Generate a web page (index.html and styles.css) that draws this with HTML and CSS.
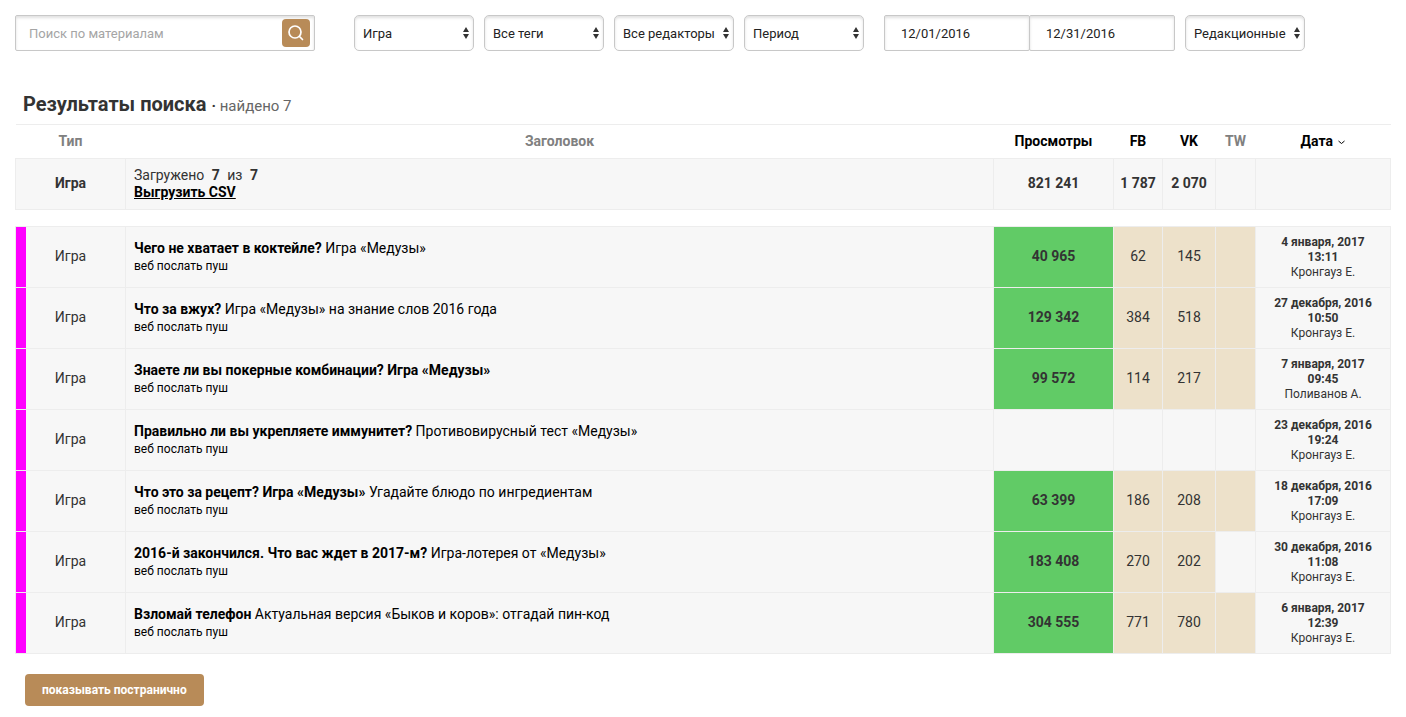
FILE: index.html
```html
<!DOCTYPE html>
<html lang="ru">
<head>
<meta charset="utf-8">
<title>Результаты поиска</title>
<meta name="viewport" content="width=device-width, initial-scale=1">
<link rel="stylesheet" href="styles.css">
</head>
<body>
<svg class="sprite" aria-hidden="true">
  <symbol id="arrows" viewBox="0 0 6 12"><path d="M3 0L6 5H0zM3 12L0 7H6z" fill="currentColor"/></symbol>
</svg>
<main class="page">
  <form class="filters">
    <div class="search">
      <input class="search-input" type="text" placeholder="Поиск по материалам" aria-label="Поиск по материалам">
      <button class="search-button" type="button" aria-label="Найти">
        <svg width="16" height="16" viewBox="0 0 16 16" fill="none" stroke="currentColor" stroke-width="1.7" stroke-linecap="round"><circle cx="7" cy="7" r="6"/><path d="M11.5 11.5L14.5 14.5"/></svg>
      </button>
    </div>
    <div class="group">
      <div class="select"><select aria-label="Тип"><option>Игра</option></select><svg class="arrows"><use href="#arrows"/></svg></div>
      <div class="select"><select aria-label="Теги"><option>Все теги</option></select><svg class="arrows"><use href="#arrows"/></svg></div>
      <div class="select"><select aria-label="Редакторы"><option>Все редакторы</option></select><svg class="arrows"><use href="#arrows"/></svg></div>
      <div class="select"><select aria-label="Период"><option>Период</option></select><svg class="arrows"><use href="#arrows"/></svg></div>
    </div>
    <div class="group">
      <div class="dates">
        <input class="date-input" type="text" value="12/01/2016" aria-label="Начало периода">
        <input class="date-input" type="text" value="12/31/2016" aria-label="Конец периода">
      </div>
      <div class="select"><select aria-label="Материалы"><option>Редакционные</option></select><svg class="arrows"><use href="#arrows"/></svg></div>
    </div>
  </form>

  <h1 class="heading">Результаты поиска <span class="found"><b>·</b> найдено 7</span></h1>

  <table class="results">
    <colgroup><col class="col-type"><col><col class="col-views"><col class="col-fb"><col class="col-vk"><col class="col-tw"><col class="col-date"></colgroup>
    <thead>
      <tr>
        <th class="muted">Тип</th><th class="muted">Заголовок</th><th>Просмотры</th><th>FB</th><th>VK</th><th class="muted">TW</th>
        <th>Дата <svg class="chevron" width="7" height="5" viewBox="0 0 7 5" fill="none" stroke="currentColor"><path d="M.5 1l3 2.5 3-2.5"/></svg></th>
      </tr>
    </thead>
    <tbody>
      <tr class="summary">
        <td>Игра</td>
        <td class="title">Загружено <b class="count">7</b> из <b class="count">7</b><br><a class="export" href="#">Выгрузить CSV</a></td>
        <td>821&nbsp;241</td><td>1&nbsp;787</td><td>2&nbsp;070</td><td></td><td></td>
      </tr>
    </tbody>
    <tbody>
      <tr class="spacer"><td colspan="7"></td></tr>
    </tbody>
    <tbody class="items">
      <tr>
        <td class="type">Игра</td>
        <td class="title"><a href="#"><b>Чего не хватает в коктейле?</b> Игра «Медузы»</a><div class="actions"><a href="#">веб</a> <a href="#">послать пуш</a></div></td>
        <td class="views">40&nbsp;965</td><td class="social">62</td><td class="social">145</td><td class="social"></td>
        <td class="date"><b>4 января, 2017<br>13:11</b><br>Кронгауз Е.</td>
      </tr>
      <tr>
        <td class="type">Игра</td>
        <td class="title"><a href="#"><b>Что за вжух?</b> Игра «Медузы» на знание слов 2016 года</a><div class="actions"><a href="#">веб</a> <a href="#">послать пуш</a></div></td>
        <td class="views">129&nbsp;342</td><td class="social">384</td><td class="social">518</td><td class="social"></td>
        <td class="date"><b>27 декабря, 2016<br>10:50</b><br>Кронгауз Е.</td>
      </tr>
      <tr>
        <td class="type">Игра</td>
        <td class="title"><a href="#"><b>Знаете ли вы покерные комбинации? Игра «Медузы»</b></a><div class="actions"><a href="#">веб</a> <a href="#">послать пуш</a></div></td>
        <td class="views">99&nbsp;572</td><td class="social">114</td><td class="social">217</td><td class="social"></td>
        <td class="date"><b>7 января, 2017<br>09:45</b><br>Поливанов А.</td>
      </tr>
      <tr>
        <td class="type">Игра</td>
        <td class="title"><a href="#"><b>Правильно ли вы укрепляете иммунитет?</b> Противовирусный тест «Медузы»</a><div class="actions"><a href="#">веб</a> <a href="#">послать пуш</a></div></td>
        <td></td><td></td><td></td><td></td>
        <td class="date"><b>23 декабря, 2016<br>19:24</b><br>Кронгауз Е.</td>
      </tr>
      <tr>
        <td class="type">Игра</td>
        <td class="title"><a href="#"><b>Что это за рецепт? Игра «Медузы»</b> Угадайте блюдо по ингредиентам</a><div class="actions"><a href="#">веб</a> <a href="#">послать пуш</a></div></td>
        <td class="views">63&nbsp;399</td><td class="social">186</td><td class="social">208</td><td class="social"></td>
        <td class="date"><b>18 декабря, 2016<br>17:09</b><br>Кронгауз Е.</td>
      </tr>
      <tr>
        <td class="type">Игра</td>
        <td class="title"><a href="#"><b>2016-й закончился. Что вас ждет в 2017-м?</b> Игра-лотерея от «Медузы»</a><div class="actions"><a href="#">веб</a> <a href="#">послать пуш</a></div></td>
        <td class="views">183&nbsp;408</td><td class="social">270</td><td class="social">202</td><td></td>
        <td class="date"><b>30 декабря, 2016<br>11:08</b><br>Кронгауз Е.</td>
      </tr>
      <tr>
        <td class="type">Игра</td>
        <td class="title"><a href="#"><b>Взломай телефон</b> Актуальная версия «Быков и коров»: отгадай пин-код</a><div class="actions"><a href="#">веб</a> <a href="#">послать пуш</a></div></td>
        <td class="views">304&nbsp;555</td><td class="social">771</td><td class="social">780</td><td class="social"></td>
        <td class="date"><b>6 января, 2017<br>12:39</b><br>Кронгауз Е.</td>
      </tr>
    </tbody>
  </table>

  <button class="paging" type="button">показывать постранично</button>
</main>
</body>
</html>
```
FILE: styles.css
```css
* { box-sizing: border-box; }

body {
  margin: 0;
  background: #fff;
  color: #333;
  font: 14px/17px Roboto, "Liberation Sans", sans-serif;
}

a { color: #000; text-decoration: none; }

b { font-weight: 700; }

.sprite { display: none; }

.page { padding: 15px 15px 11px; }

.filters {
  display: flex;
  flex-wrap: wrap;
  row-gap: 10px;
  font-size: 13px;
}

.search,
.select select,
.date-input {
  height: 36px;
  border: 1px solid #c8c8c8;
  background: #fff;
  box-shadow: inset 0 2px 3px rgba(0, 0, 0, 0.12);
  color: #222;
  font: inherit;
}

.search {
  display: flex;
  align-items: center;
  width: 300px;
  margin-right: 39px;
  padding-right: 4px;
  border-radius: 2px;
}

.search-input {
  flex: 1;
  min-width: 0;
  padding: 0 13px;
  border: 0;
  outline: 0;
  background: transparent;
  font: inherit;
}

.search-input::placeholder { color: #a5a5a5; }

.search-button {
  display: flex;
  align-items: center;
  justify-content: center;
  width: 28px;
  height: 28px;
  padding: 0;
  border: 0;
  border-radius: 4px;
  background: #b88b58;
  color: #fff;
}

.group {
  display: flex;
  gap: 10px;
  margin-right: 20px;
}

.select { position: relative; width: 120px; }

.select select {
  appearance: none;
  width: 100%;
  padding: 0 14px 0 8px;
  border-radius: 5px;
}

.arrows {
  position: absolute;
  top: 12px;
  right: 5px;
  width: 6px;
  height: 12px;
  color: #333;
  pointer-events: none;
}

.dates { display: flex; }

.date-input {
  width: 146px;
  padding: 0 16px;
  border-radius: 2px;
}

.date-input + .date-input { margin-left: -1px; }

.heading {
  margin: 40px 0 5px;
  padding: 0 8px;
  font-size: 20px;
  line-height: 26px;
  font-weight: 700;
}

.found {
  color: #666;
  font-size: 15px;
  font-weight: 400;
}

.found b { color: #333; }

.results {
  width: 100%;
  border-collapse: collapse;
  table-layout: fixed;
}

.col-type { width: 110px; }
.col-views { width: 120px; }
.col-fb { width: 49px; }
.col-vk { width: 53px; }
.col-tw { width: 40px; }
.col-date { width: 135px; }

.results th {
  height: 34px;
  padding: 0;
  border-top: 1px solid #ededed;
  color: #000;
  font-weight: 700;
  text-align: center;
}

.results .muted { color: #808080; }

.chevron { margin-left: 2px; vertical-align: 1px; }

.results td {
  padding: 0 0 2px;
  border: 1px solid #ededed;
  background: #f7f7f7;
  text-align: center;
}

.summary td { height: 51px; font-weight: 700; }

.results .spacer td {
  height: 17px;
  padding: 0;
  border-right: 0;
  border-left: 0;
  background: none;
}

.items td { height: 61px; }

.results .title {
  padding: 0 8px;
  font-weight: 400;
  text-align: left;
}

.count { margin: 0 4px; }

.export { font-weight: 700; text-decoration: underline; }

.actions { font-size: 12px; line-height: 18px; }

.results .type { background: linear-gradient(#f0f, #f0f) left / 10px 100% no-repeat #f7f7f7; }

.results .views { background: #61cb66; font-weight: 700; }

.results .social { background: #ede1ca; }

.results .date { padding: 0; font-size: 12px; line-height: 15px; }

.paging {
  display: block;
  height: 32px;
  margin: 20px 0 0 10px;
  padding: 0 17px;
  border: 0;
  border-radius: 4px;
  background: #b88b58;
  color: #fff;
  font: inherit;
  font-size: 12px;
  font-weight: 700;
}
```
